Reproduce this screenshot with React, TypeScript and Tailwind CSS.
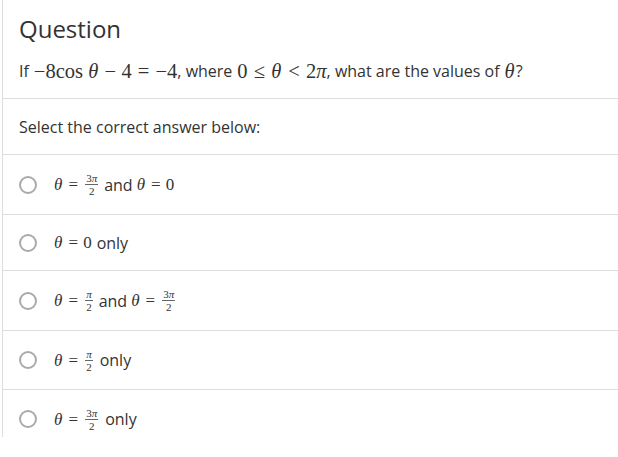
import React from 'react';

const serifCls = "font-['Liberation_Serif','DejaVu_Serif',serif]";

// relation / binary operator with KaTeX-like spacing
const Rel = ({ c }: { c: string }) => <span className="mx-[0.3em]">{c}</span>;
const Bin = ({ c }: { c: string }) => <span className="mx-[0.26em]">{c}</span>;
const Th = () => <i className="pr-[1px]">θ</i>;
const Pi = () => <i>π</i>;

function M({ children, big }: { children: React.ReactNode; big?: boolean }) {
  return (
    <span className={`inline-flex items-center leading-none ${big ? 'text-[20.5px]' : 'text-[17px]'} ${serifCls}`}>
      {children}
    </span>
  );
}

// Small stacked fraction
function Frac({ num, den }: { num: React.ReactNode; den: React.ReactNode }) {
  return (
    <span className={`mx-[2px] inline-flex flex-col items-center text-[11px] leading-[10px] ${serifCls}`}>
      <span className="border-b border-[#666] px-[1px] pb-[1px]">{num}</span>
      <span className="pt-[1px]">{den}</span>
    </span>
  );
}

const ThreePi = (
  <>
    3<Pi />
  </>
);

const options: { id: string; label: React.ReactNode; h: string }[] = [
  {
    id: 'a',
    h: 'h-[60px]',
    label: (
      <>
        <M>
          <Th />
          <Rel c="=" />
          <Frac num={ThreePi} den="2" />
        </M>
        <span className="mx-[4px]">and</span>
        <M>
          <Th />
          <Rel c="=" />
          0
        </M>
      </>
    ),
  },
  {
    id: 'b',
    h: 'h-[56px]',
    label: (
      <>
        <M>
          <Th />
          <Rel c="=" />
          0
        </M>
        <span className="ml-[5px]">only</span>
      </>
    ),
  },
  {
    id: 'c',
    h: 'h-[60px]',
    label: (
      <>
        <M>
          <Th />
          <Rel c="=" />
          <Frac num={<Pi />} den="2" />
        </M>
        <span className="mx-[4px]">and</span>
        <M>
          <Th />
          <Rel c="=" />
          <Frac num={ThreePi} den="2" />
        </M>
      </>
    ),
  },
  {
    id: 'd',
    h: 'h-[59px]',
    label: (
      <>
        <M>
          <Th />
          <Rel c="=" />
          <Frac num={<Pi />} den="2" />
        </M>
        <span className="ml-[5px]">only</span>
      </>
    ),
  },
  {
    id: 'e',
    h: 'h-[58px]',
    label: (
      <>
        <M>
          <Th />
          <Rel c="=" />
          <Frac num={ThreePi} den="2" />
        </M>
        <span className="ml-[5px]">only</span>
      </>
    ),
  },
];

export default function App() {
  return (
    <div className="h-[457px] w-[618px] bg-white text-[#333]" style={{ fontFamily: '"Open Sans", sans-serif' }}>
      <div className="ml-[2px] h-[437px] border-l border-[#ddd]">
        {/* Question header */}
        <div className="border-b border-[#ddd] px-4 pt-[12px] pb-[15px]">
          <h1 className="text-[24px] leading-[34px]">Question</h1>
          <p className="mt-[13px] flex items-center whitespace-nowrap text-[16px] leading-[24px]">
            <span className="mr-[5px]">If</span>
            <M big>
              −8cos<span className="ml-[0.25em]" />
              <Th />
              <Bin c="−" />4<Rel c="=" />−4
            </M>
            <span className="mr-[5px]">, where</span>
            <M big>
              0<Rel c="≤" />
              <Th />
              <Rel c="<" />2<Pi />
            </M>
            <span className="mr-[5px]">, what are the values of</span>
            <M big>
              <Th />
            </M>
            <span>?</span>
          </p>
        </div>

        <div className="flex h-[56px] items-center border-b border-[#ddd] px-4 text-[16px]">
          Select the correct answer below:
        </div>

        {options.map((o, i) => (
          <label
            key={o.id}
            className={`flex ${o.h} items-center gap-[17px] pl-[16px] text-[16px] ${i < options.length - 1 ? 'border-b border-[#ddd]' : ''}`}
          >
            <span className="h-[18px] w-[18px] shrink-0 rounded-full border-2 border-[#aaa] bg-white" />
            <span className="flex items-center whitespace-nowrap">{o.label}</span>
          </label>
        ))}
      </div>
    </div>
  );
}
